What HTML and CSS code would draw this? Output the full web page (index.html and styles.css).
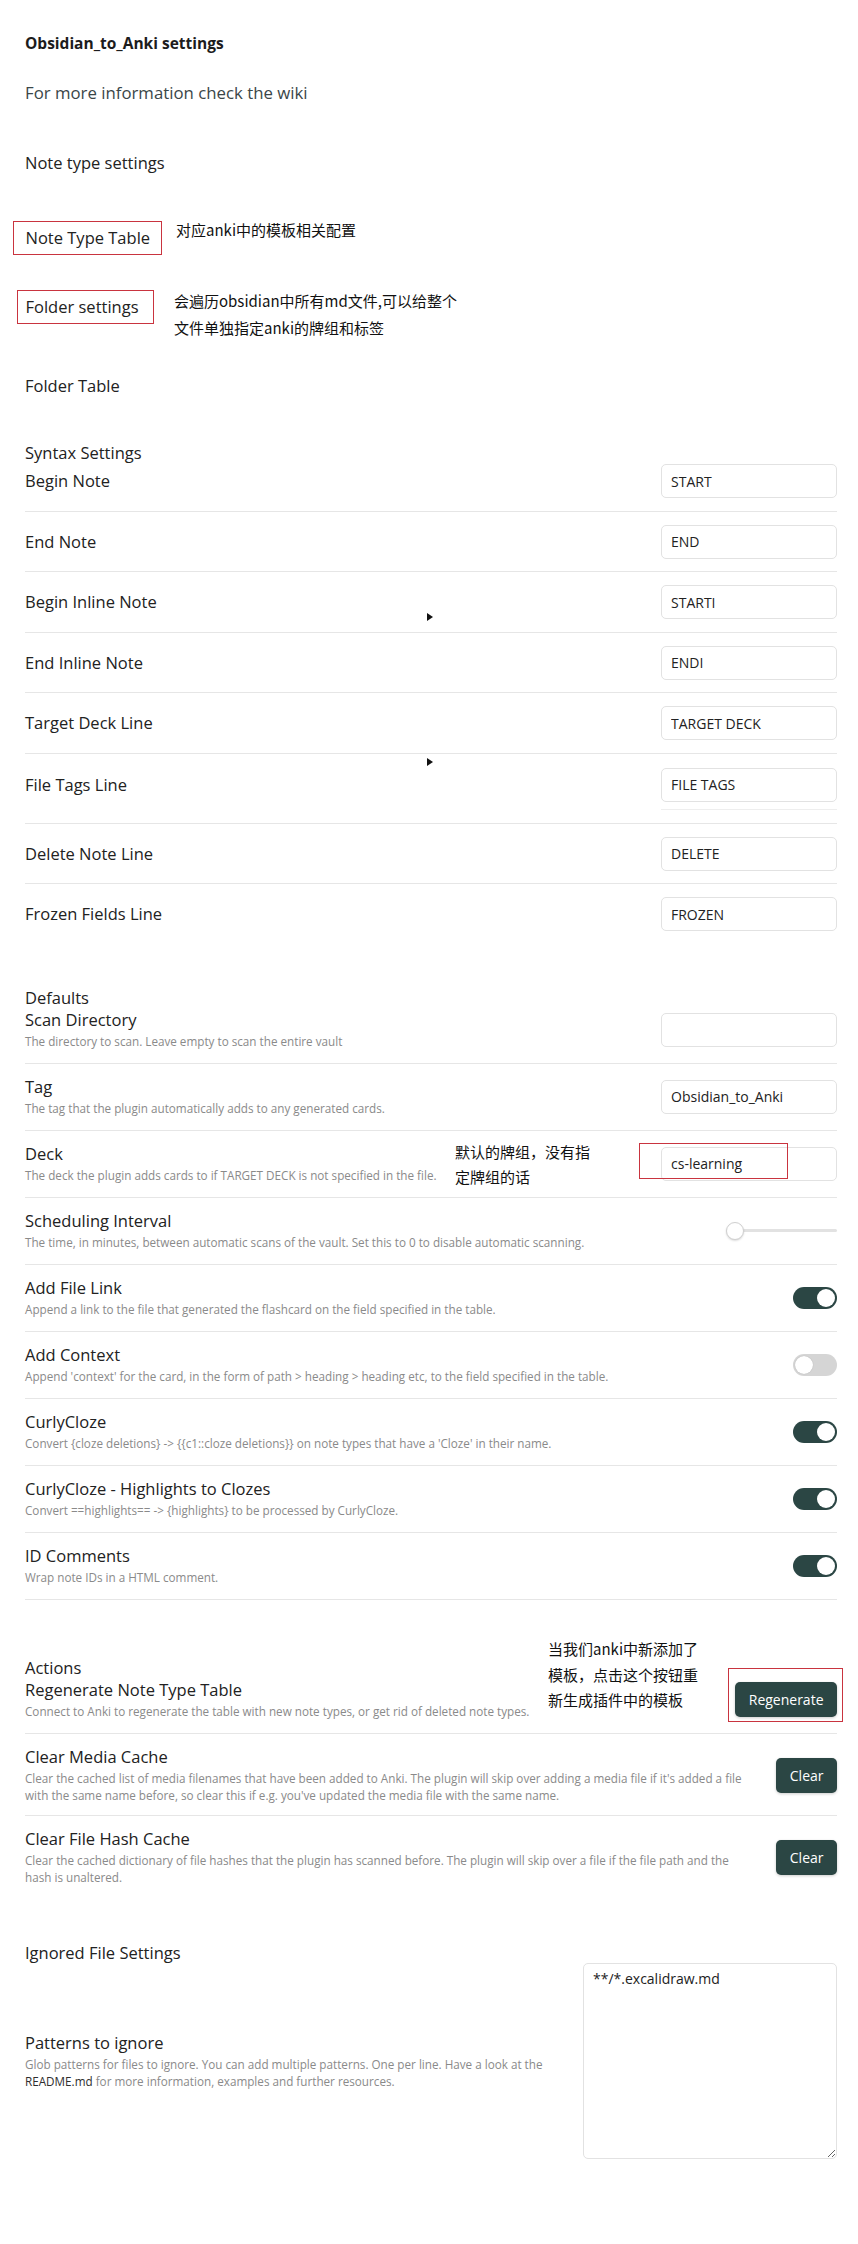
FILE: index.html
```html
<!DOCTYPE html>
<html lang="zh-CN">
<head>
<meta charset="utf-8">
<title>Obsidian_to_Anki settings</title>
<link rel="stylesheet" href="styles.css">
</head>
<body>
<div class="page">
  <div class="title">Obsidian_to_Anki settings</div>
  <div class="info-link">For more information check the wiki</div>

  <div class="heading h-note">Note type settings</div>

  <div class="boxed-row row-nt">
    <div class="red-box box-nt">Note Type Table</div>
    <div class="cn-note cn-nt">对应anki中的模板相关配置</div>
  </div>

  <div class="boxed-row row-fs">
    <div class="red-box box-fs">Folder settings</div>
    <div class="cn-note cn-fs">会遍历obsidian中所有md文件,可以给整个<br>文件单独指定anki的牌组和标签</div>
  </div>

  <div class="heading h-folder">Folder Table</div>

  <div class="heading h-syntax">Syntax Settings</div>
  <div class="group">
    <div class="item first">
      <div class="item-info"><div class="item-name">Begin Note</div></div>
      <div class="item-control"><input class="text-in" type="text" value="START"></div>
    </div>
    <div class="item">
      <div class="item-info"><div class="item-name">End Note</div></div>
      <div class="item-control"><input class="text-in" type="text" value="END"></div>
    </div>
    <div class="item">
      <div class="item-info"><div class="item-name">Begin Inline Note</div></div>
      <div class="item-control"><input class="text-in" type="text" value="STARTI"></div>
    </div>
    <div class="item">
      <div class="item-info"><div class="item-name">End Inline Note</div></div>
      <div class="item-control"><input class="text-in" type="text" value="ENDI"></div>
    </div>
    <div class="item">
      <div class="item-info"><div class="item-name">Target Deck Line</div></div>
      <div class="item-control"><input class="text-in" type="text" value="TARGET DECK"></div>
    </div>
    <div class="item item-tags">
      <div class="item-info"><div class="item-name tall">File Tags Line</div></div>
      <div class="item-control stack">
        <input class="text-in" type="text" value="FILE TAGS">
        <div class="ghost-line"></div>
      </div>
    </div>
    <div class="item">
      <div class="item-info"><div class="item-name">Delete Note Line</div></div>
      <div class="item-control"><input class="text-in" type="text" value="DELETE"></div>
    </div>
    <div class="item last">
      <div class="item-info"><div class="item-name">Frozen Fields Line</div></div>
      <div class="item-control"><input class="text-in" type="text" value="FROZEN"></div>
    </div>
  </div>

  <div class="heading h-defaults">Defaults</div>
  <div class="group">
    <div class="item desc-item first">
      <div class="item-info">
        <div class="item-name">Scan Directory</div>
        <div class="item-desc">The directory to scan. Leave empty to scan the entire vault</div>
      </div>
      <div class="item-control"><input class="text-in" type="text" value=""></div>
    </div>
    <div class="item desc-item">
      <div class="item-info">
        <div class="item-name">Tag</div>
        <div class="item-desc">The tag that the plugin automatically adds to any generated cards.</div>
      </div>
      <div class="item-control"><input class="text-in" type="text" value="Obsidian_to_Anki"></div>
    </div>
    <div class="item desc-item annotated">
      <div class="item-info">
        <div class="item-name">Deck</div>
        <div class="item-desc">The deck the plugin adds cards to if TARGET DECK is not specified in the file.</div>
      </div>
      <div class="item-control"><input class="text-in" type="text" value="cs-learning"></div>
      <div class="cn-note cn-deck">默认的牌组，没有指<br>定牌组的话</div>
      <div class="red-frame frame-deck"></div>
    </div>
    <div class="item desc-item">
      <div class="item-info">
        <div class="item-name">Scheduling Interval</div>
        <div class="item-desc">The time, in minutes, between automatic scans of the vault. Set this to 0 to disable automatic scanning.</div>
      </div>
      <div class="item-control">
        <div class="slider"><span class="slider-track"></span><span class="slider-knob"></span></div>
      </div>
    </div>
    <div class="item desc-item">
      <div class="item-info">
        <div class="item-name">Add File Link</div>
        <div class="item-desc">Append a link to the file that generated the flashcard on the field specified in the table.</div>
      </div>
      <div class="item-control"><div class="toggle on"><span class="knob"></span></div></div>
    </div>
    <div class="item desc-item">
      <div class="item-info">
        <div class="item-name">Add Context</div>
        <div class="item-desc">Append 'context' for the card, in the form of path &gt; heading &gt; heading etc, to the field specified in the table.</div>
      </div>
      <div class="item-control"><div class="toggle"><span class="knob"></span></div></div>
    </div>
    <div class="item desc-item">
      <div class="item-info">
        <div class="item-name">CurlyCloze</div>
        <div class="item-desc">Convert {cloze deletions} -&gt; {{c1::cloze deletions}} on note types that have a 'Cloze' in their name.</div>
      </div>
      <div class="item-control"><div class="toggle on"><span class="knob"></span></div></div>
    </div>
    <div class="item desc-item">
      <div class="item-info">
        <div class="item-name">CurlyCloze - Highlights to Clozes</div>
        <div class="item-desc">Convert ==highlights== -&gt; {highlights} to be processed by CurlyCloze.</div>
      </div>
      <div class="item-control"><div class="toggle on"><span class="knob"></span></div></div>
    </div>
    <div class="item desc-item">
      <div class="item-info">
        <div class="item-name">ID Comments</div>
        <div class="item-desc">Wrap note IDs in a HTML comment.</div>
      </div>
      <div class="item-control"><div class="toggle on"><span class="knob"></span></div></div>
    </div>
  </div>

  <div class="heading h-actions">Actions</div>
  <div class="group">
    <div class="item desc-item first annotated">
      <div class="item-info">
        <div class="item-name">Regenerate Note Type Table</div>
        <div class="item-desc">Connect to Anki to regenerate the table with new note types, or get rid of deleted note types.</div>
      </div>
      <div class="item-control"><button class="btn" type="button">Regenerate</button></div>
      <div class="cn-note cn-regen">当我们anki中新添加了<br>模板，点击这个按钮重<br>新生成插件中的模板</div>
      <div class="red-frame frame-regen"></div>
    </div>
    <div class="item desc-item tight">
      <div class="item-info">
        <div class="item-name">Clear Media Cache</div>
        <div class="item-desc">Clear the cached list of media filenames that have been added to Anki. The plugin will skip over adding a media file if it's added a file<br>with the same name before, so clear this if e.g. you've updated the media file with the same name.</div>
      </div>
      <div class="item-control"><button class="btn" type="button">Clear</button></div>
    </div>
    <div class="item desc-item last">
      <div class="item-info">
        <div class="item-name">Clear File Hash Cache</div>
        <div class="item-desc">Clear the cached dictionary of file hashes that the plugin has scanned before. The plugin will skip over a file if the file path and the<br>hash is unaltered.</div>
      </div>
      <div class="item-control"><button class="btn" type="button">Clear</button></div>
    </div>
  </div>

  <div class="heading h-ignored">Ignored File Settings</div>
  <div class="group">
    <div class="item desc-item first last">
      <div class="item-info">
        <div class="item-name">Patterns to ignore</div>
        <div class="item-desc">Glob patterns for files to ignore. You can add multiple patterns. One per line. Have a look at the<br><span class="desc-link">README.md</span> for more information, examples and further resources.</div>
      </div>
      <div class="item-control"><textarea class="area" spellcheck="false">**/*.excalidraw.md</textarea></div>
    </div>
  </div>

  <span class="tri tri-a"></span>
  <span class="tri tri-b"></span>
</div>
</body>
</html>
```

FILE: styles.css
```css
html, body {
  margin: 0;
  padding: 0;
  background: #ffffff;
}

body {
  font-family: "Open Sans", "Noto Sans", "Noto Sans CJK SC", sans-serif;
  color: #222222;
}

.page {
  position: relative;
  padding: 31px 21px 0 25px;
  min-height: 2244px;
  box-sizing: border-box;
}

.title {
  font-size: 15.5px;
  font-weight: 700;
  line-height: 24px;
  color: #1c1c1c;
}

.info-link {
  margin-top: 26px;
  font-size: 16.8px;
  line-height: 24px;
  color: #3a4648;
}

.heading {
  font-size: 16.5px;
  line-height: 22px;
  color: #222222;
}

.h-note { margin-top: 46px; line-height: 24px; }
.h-folder { margin-top: 33px; line-height: 24px; }
.h-syntax { margin-top: 44px; }
.h-defaults { margin-top: 43.5px; }
.h-actions { margin-top: 57.5px; }
.h-ignored { margin-top: 44px; line-height: 20px; }

/* annotated headings with red boxes */
.boxed-row {
  display: flex;
  align-items: flex-start;
}

.row-nt { margin-top: 46px; margin-left: -12px; }
.row-fs { margin-top: 35px; margin-left: -8px; }

.red-box {
  box-sizing: border-box;
  height: 34px;
  border: 1.5px solid #c9343f;
  font-size: 16.5px;
  line-height: 31px;
  color: #222222;
  white-space: nowrap;
}

.box-nt { width: 149px; padding-left: 11.5px; }
.box-fs { width: 137px; padding-left: 7.5px; }

.cn-note {
  font-family: "Noto Sans CJK SC", sans-serif;
  font-size: 15px;
  color: #111111;
  white-space: nowrap;
}

.cn-nt { margin-left: 14px; margin-top: -1px; line-height: 20px; }
.cn-fs { margin-left: 20px; margin-top: -2px; line-height: 26.5px; }

/* setting items */
.item {
  position: relative;
  display: flex;
  align-items: center;
  padding: 13px 0 12.5px;
  border-bottom: 1px solid #e6e6e6;
}

.item.first { padding-top: 0; }
.item.last { border-bottom: none; }
.item.tight { padding-bottom: 10.5px; }

.desc-item { padding-top: 12.5px; }
.desc-item.first { padding-top: 0; }

.item-tags {
  align-items: flex-start;
  padding: 14px 0 13px;
}

.item-info {
  flex: 1 1 auto;
  margin-right: 16px;
  min-width: 0;
}

.item-name {
  font-size: 16.5px;
  line-height: 22px;
  color: #222222;
  white-space: nowrap;
}

.item-name.tall { line-height: 34px; }

.item-desc {
  margin-top: 2px;
  font-size: 11.7px;
  line-height: 17px;
  color: #8a8a8a;
}

.desc-link { color: #2e2e2e; }

.item-control {
  flex: 0 0 auto;
  display: flex;
  justify-content: flex-end;
  align-items: center;
}

.item-control.stack {
  flex-direction: column;
  align-items: stretch;
}

.ghost-line {
  height: 1px;
  margin-top: 7px;
  background: #eeeeee;
}

.text-in {
  box-sizing: border-box;
  width: 176px;
  height: 34px;
  margin: 0;
  padding: 0 9px;
  border: 1px solid #e2e2e2;
  border-radius: 5px;
  background: #ffffff;
  font-family: "Open Sans", sans-serif;
  font-size: 14px;
  color: #222222;
  outline: none;
}

/* slider */
.slider {
  position: relative;
  width: 111px;
  height: 20px;
  display: flex;
  align-items: center;
}

.slider-track {
  display: block;
  width: 100%;
  height: 3px;
  border-radius: 2px;
  background: #e2e2e2;
}

.slider-knob {
  position: absolute;
  left: 0;
  top: 1px;
  width: 18px;
  height: 18px;
  box-sizing: border-box;
  border-radius: 50%;
  background: #ffffff;
  border: 1px solid #d0d0d0;
  box-shadow: 0 1px 2px rgba(0, 0, 0, 0.15);
}

/* toggle */
.toggle {
  position: relative;
  width: 44px;
  height: 22px;
  border-radius: 11px;
  background: #d5d5d5;
  box-sizing: border-box;
}

.toggle .knob {
  position: absolute;
  top: 2px;
  left: 2px;
  width: 18px;
  height: 18px;
  border-radius: 50%;
  background: #ffffff;
  box-shadow: 0 0 1px rgba(0, 0, 0, 0.25);
}

.toggle.on { background: #2b4644; }
.toggle.on .knob { left: 24px; box-shadow: none; }

/* buttons */
.btn {
  height: 35px;
  margin: 0;
  padding: 0 13.5px;
  border: none;
  border-radius: 5px;
  background: #2b4644;
  color: #ffffff;
  font-family: "Open Sans", sans-serif;
  font-size: 14px;
  line-height: 35px;
  box-shadow: 0 1px 3px rgba(0, 0, 0, 0.2);
}

/* textarea */
.area {
  box-sizing: border-box;
  width: 254px;
  height: 196px;
  margin: 0;
  padding: 5px 9px;
  border: 1px solid #e2e2e2;
  border-radius: 5px;
  font-family: "Open Sans", sans-serif;
  font-size: 14px;
  line-height: 20px;
  color: #222222;
  outline: none;
  resize: both;
}

/* annotation overlays */
.red-frame {
  position: absolute;
  box-sizing: border-box;
  border: 1.5px solid #c9343f;
  pointer-events: none;
}

.cn-deck {
  position: absolute;
  left: 430px;
  top: 8px;
  line-height: 25px;
}

.frame-deck {
  left: 614px;
  top: 12px;
  width: 149px;
  height: 36px;
}

.cn-regen {
  position: absolute;
  left: 523px;
  top: -43px;
  line-height: 25.5px;
}

.frame-regen {
  left: 703px;
  top: -11px;
  width: 115px;
  height: 54px;
}

/* small cursor triangles */
.tri {
  position: absolute;
  width: 0;
  height: 0;
  border-left: 6px solid #111111;
  border-top: 4px solid transparent;
  border-bottom: 4px solid transparent;
}

.tri-a { left: 427px; top: 613px; }
.tri-b { left: 427px; top: 758px; }
```
